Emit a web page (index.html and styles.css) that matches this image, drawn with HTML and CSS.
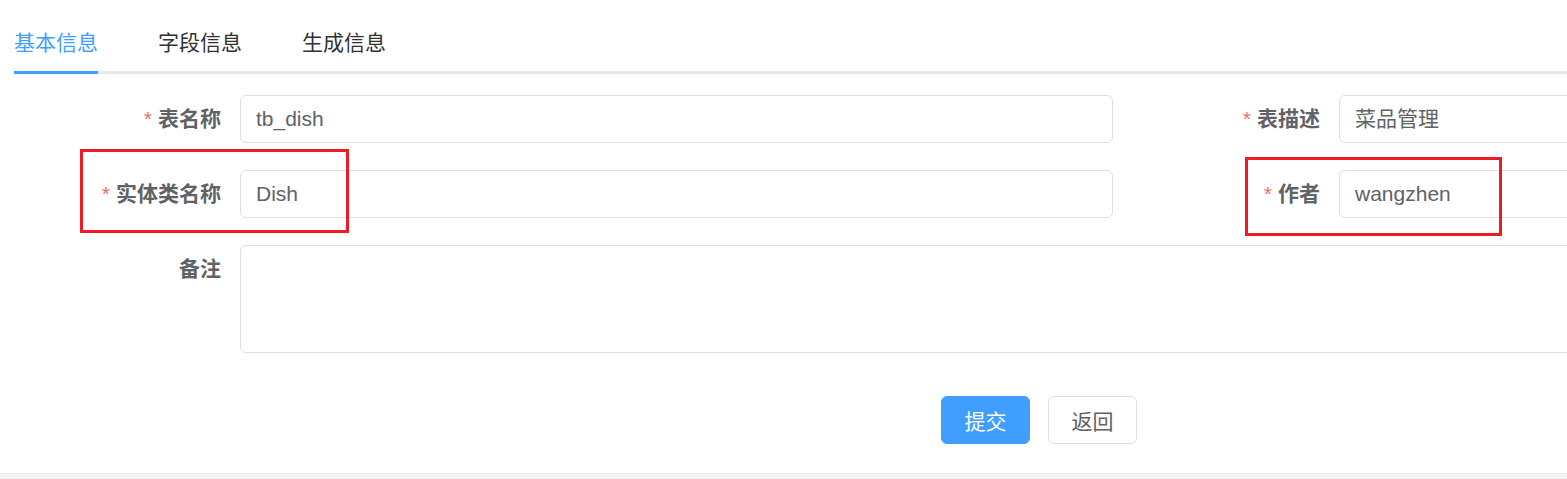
FILE: index.html
```html
<!DOCTYPE html>
<html lang="zh-CN">
<head>
    <meta charset="UTF-8">
    <title>修改生成配置</title>
    <link rel="stylesheet" href="styles.css">
</head>
<body>
    <div class="card">
        <div class="tabs">
            <div class="tab active"><span class="tab-text">基本信息</span></div>
            <div class="tab"><span class="tab-text">字段信息</span></div>
            <div class="tab"><span class="tab-text">生成信息</span></div>
        </div>

        <div class="form">
            <div class="form-row">
                <div class="form-item">
                    <label class="form-label required">表名称</label>
                    <div class="form-content"><input class="input" type="text" value="tb_dish"></div>
                </div>
                <div class="form-item">
                    <label class="form-label required">表描述</label>
                    <div class="form-content"><input class="input input-cjk" type="text" value="菜品管理"></div>
                </div>
            </div>

            <div class="form-row">
                <div class="form-item">
                    <label class="form-label required">实体类名称</label>
                    <div class="form-content"><input class="input" type="text" value="Dish"></div>
                </div>
                <div class="form-item">
                    <label class="form-label required">作者</label>
                    <div class="form-content"><input class="input" type="text" value="wangzhen"></div>
                </div>
            </div>

            <div class="form-item form-item-full">
                <label class="form-label">备注</label>
                <div class="form-content"><textarea class="textarea" rows="3"></textarea></div>
            </div>

            <div class="form-actions">
                <button class="btn btn-primary" type="button">提交</button>
                <button class="btn" type="button">返回</button>
            </div>

            <!-- annotation marks -->
            <div class="mark mark-entity"></div>
            <div class="mark mark-author"></div>
        </div>
    </div>
</body>
</html>
```

FILE: styles.css
```css
* {
    margin: 0;
    padding: 0;
    box-sizing: border-box;
}

body {
    font-family: 'Liberation Sans', 'Noto Sans CJK SC', sans-serif;
    background: #f4f4f5;
    overflow: hidden;
}

.card {
    background: #ffffff;
    border-bottom: 1px solid #e4e7ed;
    padding: 14px 0 29px 14px;
    overflow: hidden;
}

/* Tabs */
.tabs {
    display: flex;
    border-bottom: 3px solid #e4e7ed;
    margin-right: -14px;
}

.tab {
    height: 60px;
    padding: 0 30px;
    margin-bottom: -3px;
    font-size: 21px;
    color: #303133;
}

.tab:first-child {
    padding-left: 0;
}

.tab-text {
    display: block;
    height: 60px;
    line-height: 58px;
    border-bottom: 3px solid transparent;
}

.tab.active {
    color: #409eff;
}

.tab.active .tab-text {
    border-bottom-color: #409eff;
}

/* Form */
.form {
    position: relative;
    margin-top: 21px;
    width: 2198px;
}

.form-row {
    display: grid;
    grid-template-columns: 1099px 1099px;
}

.form-item {
    display: flex;
    margin-bottom: 27px;
}

.form-label {
    flex: 0 0 226px;
    padding-right: 19px;
    text-align: right;
    font-size: 21px;
    font-weight: 700;
    line-height: 48px;
    color: #606266;
}

.form-label.required::before {
    content: '*';
    color: #f56c6c;
    margin-right: 6px;
    font-weight: 400;
}

.form-content {
    flex: 1;
}

.input,
.textarea {
    display: block;
    width: 100%;
    font-family: 'Liberation Sans', 'Noto Sans CJK SC', sans-serif;
    font-size: 21px;
    color: #606266;
    background: #ffffff;
    border: 1px solid #dcdfe6;
    border-radius: 6px;
    outline: none;
}

.input {
    height: 48px;
    padding: 0 15px;
}

.input-cjk {
    padding-bottom: 5px;
}

.textarea {
    height: 108px;
    padding: 8px 15px;
    resize: none;
}

.form-actions {
    width: 2050px;
    padding-top: 16px;
    display: flex;
    justify-content: center;
    gap: 18px;
}

.btn {
    width: 89px;
    height: 48px;
    font-family: 'Liberation Sans', 'Noto Sans CJK SC', sans-serif;
    font-size: 21px;
    color: #606266;
    background: #ffffff;
    border: 1px solid #dcdfe6;
    border-radius: 6px;
}

.btn-primary {
    color: #ffffff;
    background: #409eff;
    border-color: #409eff;
}

/* Red annotation boxes drawn over the form */
.mark {
    position: absolute;
    border: 3px solid #ed1c24;
}

.mark-entity {
    left: 66px;
    top: 54px;
    width: 269px;
    height: 84px;
}

.mark-author {
    left: 1231px;
    top: 62px;
    width: 257px;
    height: 79px;
}
```
